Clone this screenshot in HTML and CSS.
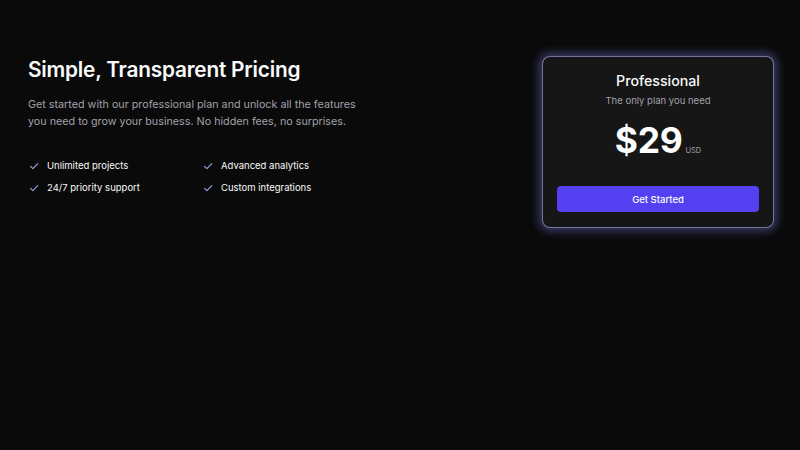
FILE: index.html
```html
<!DOCTYPE html>
<html>
<head>
<meta charset="utf-8">
<link rel="stylesheet" href="styles.css">
</head>
<body>
<main class="page">
  <section class="intro">
    <h1 class="title">Simple, Transparent Pricing</h1>
    <p class="lead">Get started with our professional plan and unlock all the features you need to grow your business. No hidden fees, no surprises.</p>
    <ul class="features">
      <li class="feature"><svg class="check" viewBox="0 0 12 12"><path d="M2.5 6.3l2.4 2.3L9.8 3.6"/></svg>Unlimited projects</li>
      <li class="feature"><svg class="check" viewBox="0 0 12 12"><path d="M2.5 6.3l2.4 2.3L9.8 3.6"/></svg>Advanced analytics</li>
      <li class="feature"><svg class="check" viewBox="0 0 12 12"><path d="M2.5 6.3l2.4 2.3L9.8 3.6"/></svg>24/7 priority support</li>
      <li class="feature"><svg class="check" viewBox="0 0 12 12"><path d="M2.5 6.3l2.4 2.3L9.8 3.6"/></svg>Custom integrations</li>
    </ul>
  </section>
  <aside class="card">
    <h2 class="plan">Professional</h2>
    <p class="plan-sub">The only plan you need</p>
    <div class="price"><span class="amount">$29</span><span class="currency">USD</span></div>
    <button class="cta">Get Started</button>
  </aside>
</main>
</body>
</html>
```
FILE: styles.css
```css
* { box-sizing: border-box; }
html, body { margin: 0; padding: 0; background: #0a0a0a; }
body { font-family: Inter, "Noto Sans", sans-serif; color: #fafafa; width: 800px; height: 450px; overflow: hidden; }
.page { display: flex; justify-content: space-between; align-items: flex-start; padding: 56px 26px 0 28px; }
.intro { width: 340px; }
.title { margin: 0; font-size: 20.8px; line-height: 28px; font-weight: 600; letter-spacing: -0.2px; color: #fafafa; }
.lead { margin: 12px 0 0; font-size: 10.75px; line-height: 17px; color: #a1a1aa; }
.features { list-style: none; margin: 29px 0 0; padding: 0; display: grid; grid-template-columns: 174px 174px; row-gap: 8px; }
.feature { display: flex; align-items: center; gap: 7px; font-size: 9.5px; line-height: 14px; color: #fafafa; }
.check { width: 12px; height: 12px; fill: none; stroke: #9ea3e6; stroke-width: 1.1; stroke-linecap: round; stroke-linejoin: round; }
.card { width: 232px; height: 172px; background: #161616; border: 1.5px solid rgba(150,150,200,0.75); border-radius: 8px; box-shadow: 0 0 10px 3px rgba(120,125,225,0.45); padding: 14px 14px 15px; display: flex; flex-direction: column; align-items: center; }
.plan { margin: 0; font-size: 14.2px; line-height: 20px; font-weight: 500; color: #fafafa; }
.plan-sub { margin: 3px 0 0; font-size: 9.5px; line-height: 14px; color: #a1a1aa; }
.price { margin-top: 11px; display: flex; align-items: baseline; gap: 3px; }
.amount { font-size: 35.4px; line-height: 44px; font-weight: 700; color: #fff; letter-spacing: -0.3px; }
.currency { font-size: 7.5px; color: #a1a1aa; }
.cta { margin-top: auto; width: 100%; height: 26px; border: 0; border-radius: 4px; background: #5440f0; color: #fff; font-family: inherit; font-size: 9.5px; font-weight: 500; }
```
